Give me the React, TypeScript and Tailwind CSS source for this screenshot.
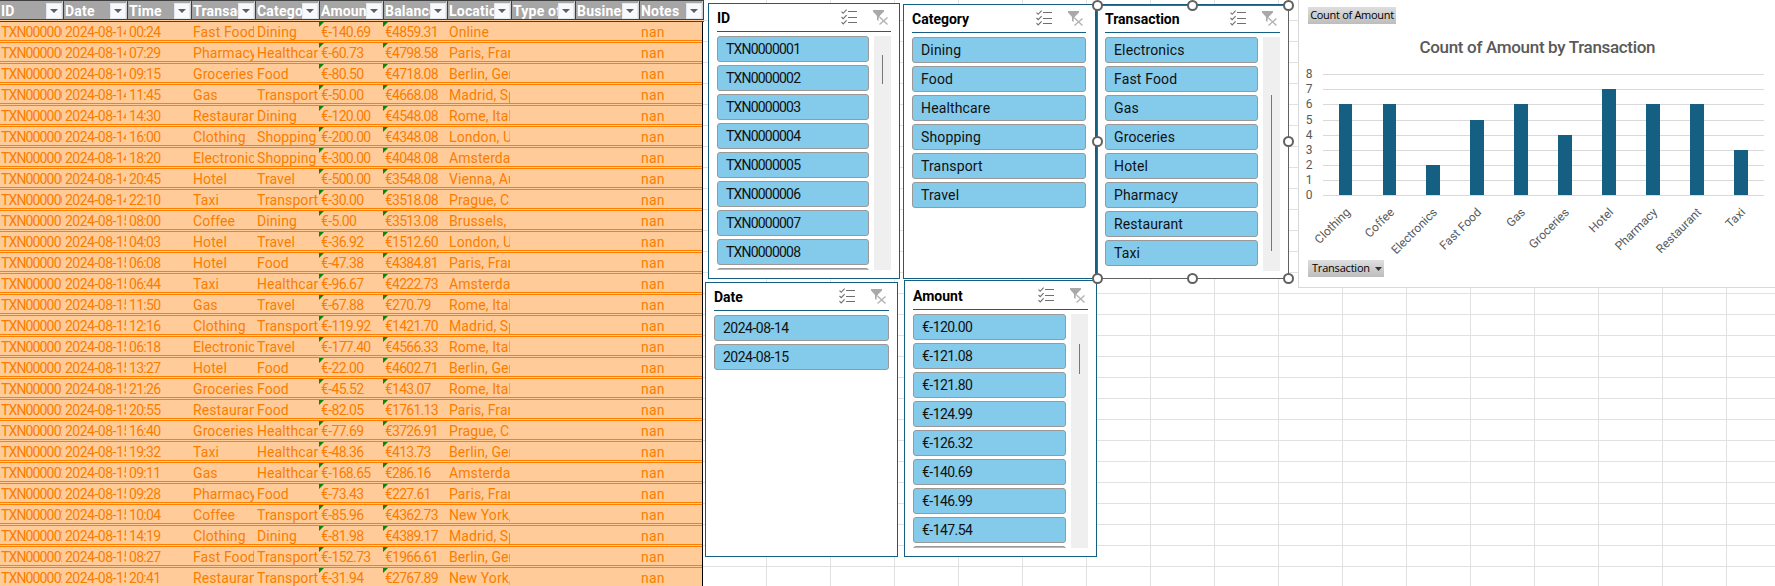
import React from "react";

type Row = [string, string, string, string, string, string, string, string];

const D1 = "2024-08-14";
const D2 = "2024-08-15";
const rows: Row[] = [
  ["TXN0000001", D1, "00:24", "Fast Food", "Dining", "€-140.69", "€4859.31", "Online"],
  ["TXN0000002", D1, "07:29", "Pharmacy", "Healthcare", "€-60.73", "€4798.58", "Paris, France"],
  ["TXN0000003", D1, "09:15", "Groceries", "Food", "€-80.50", "€4718.08", "Berlin, Germany"],
  ["TXN0000004", D1, "11:45", "Gas", "Transport", "€-50.00", "€4668.08", "Madrid, Spain"],
  ["TXN0000005", D1, "14:30", "Restaurant", "Dining", "€-120.00", "€4548.08", "Rome, Italy"],
  ["TXN0000006", D1, "16:00", "Clothing", "Shopping", "€-200.00", "€4348.08", "London, UK"],
  ["TXN0000007", D1, "18:20", "Electronics", "Shopping", "€-300.00", "€4048.08", "Amsterdam"],
  ["TXN0000008", D1, "20:45", "Hotel", "Travel", "€-500.00", "€3548.08", "Vienna, Austria"],
  ["TXN0000009", D1, "22:10", "Taxi", "Transport", "€-30.00", "€3518.08", "Prague, Czechia"],
  ["TXN0000010", D2, "08:00", "Coffee", "Dining", "€-5.00", "€3513.08", "Brussels, Belgium"],
  ["TXN0000011", D2, "04:03", "Hotel", "Travel", "€-36.92", "€1512.60", "London, UK"],
  ["TXN0000012", D2, "06:08", "Hotel", "Food", "€-47.38", "€4384.81", "Paris, France"],
  ["TXN0000013", D2, "06:44", "Taxi", "Healthcare", "€-96.67", "€4222.73", "Amsterdam"],
  ["TXN0000014", D2, "11:50", "Gas", "Travel", "€-67.88", "€270.79", "Rome, Italy"],
  ["TXN0000015", D2, "12:16", "Clothing", "Transport", "€-119.92", "€1421.70", "Madrid, Spain"],
  ["TXN0000016", D2, "06:18", "Electronics", "Travel", "€-177.40", "€4566.33", "Rome, Italy"],
  ["TXN0000017", D2, "13:27", "Hotel", "Food", "€-22.00", "€4602.71", "Berlin, Germany"],
  ["TXN0000018", D2, "21:26", "Groceries", "Food", "€-45.52", "€143.07", "Rome, Italy"],
  ["TXN0000020", D2, "20:55", "Restaurant", "Food", "€-82.05", "€1761.13", "Paris, France"],
  ["TXN0000021", D2, "16:40", "Groceries", "Healthcare", "€-77.69", "€3726.91", "Prague, Czechia"],
  ["TXN0000022", D2, "19:32", "Taxi", "Healthcare", "€-48.36", "€413.73", "Berlin, Germany"],
  ["TXN0000023", D2, "09:11", "Gas", "Healthcare", "€-168.65", "€286.16", "Amsterdam"],
  ["TXN0000024", D2, "09:28", "Pharmacy", "Food", "€-73.43", "€227.61", "Paris, France"],
  ["TXN0000025", D2, "10:04", "Coffee", "Transport", "€-85.96", "€4362.73", "New York, USA"],
  ["TXN0000026", D2, "14:19", "Clothing", "Dining", "€-81.98", "€4389.17", "Madrid, Spain"],
  ["TXN0000027", D2, "08:27", "Fast Food", "Transport", "€-152.73", "€1966.61", "Berlin, Germany"],
  ["TXN0000028", D2, "20:41", "Restaurant", "Transport", "€-31.94", "€2767.89", "New York, USA"],
];

const headers = [
  "ID", "Date", "Time", "Transaction", "Category", "Amount",
  "Balance", "Location", "Type of", "Business", "Notes",
];

const columnTracking = [
  "tracking-[-0.85px]", "tracking-[-0.5px]", "tracking-[-0.7px]", "tracking-[0.1px]", "tracking-[0.1px]",
  "tracking-[-0.65px]", "tracking-[-0.75px]", "tracking-[0.1px]", "", "", "tracking-[0.2px]",
];

function HeaderCell({ label }: { label: string }) {
  return (
    <div className="flex h-full w-16 shrink-0 items-start border-r border-[#404040] pl-px">
      <div className="flex h-[18px] w-[62px] border-r border-[#d0d0d0]">
        <div className="h-[19px] w-[45px] shrink-0 overflow-hidden whitespace-nowrap text-[14px] leading-[21px] font-bold tracking-[0.2px] text-white">
          {label}
        </div>
        <div className="mt-[2px] flex h-4 w-4 shrink-0 items-center justify-center border border-[#e3e8f0] bg-[#f7f9fc]">
          <svg width="8" height="4" viewBox="0 0 8 4">
            <path d="M0 0H8L4 4Z" fill="#5f5f5f" />
          </svg>
        </div>
      </div>
    </div>
  );
}

function Cell({ value, col }: { value: string; col: number }) {
  const money = col === 5 || col === 6;
  return (
    <div className="relative h-[18px] w-16 shrink-0 pl-px">
      {money && (
        <svg className="absolute -left-px top-0" width="5" height="5" viewBox="0 0 5 5">
          <path d="M0 0H5L0 5Z" fill="#0a850a" />
        </svg>
      )}
      <div
        className={
          "h-[18px] w-[61px] overflow-hidden whitespace-nowrap text-[14px] leading-[21px] " + columnTracking[col]
        }
      >
        {value}
      </div>
    </div>
  );
}

function Table() {
  return (
    <div className="h-[586px] w-[704px] shrink-0 overflow-hidden">
      <div className="flex h-5 w-[704px] border-y border-[#404040] bg-[#a6a6a6]">
        {headers.map((h) => (
          <HeaderCell key={h} label={h} />
        ))}
      </div>
      <div className="h-[2px] w-[704px] border-b border-[#404040] bg-[#ffcc99]" />
      <div className="w-[703px] border-r border-black bg-[#ffcc99] text-[#fa7d00]">
        {rows.map((r) => (
          <div key={r[0]} className="h-[21px]">
            <div className="flex h-[18px]">
              {r.map((v, i) => (
                <Cell key={i} value={v} col={i} />
              ))}
              <div className="w-32 shrink-0" />
              <Cell value="nan" col={10} />
            </div>
            <div className="h-[3px] border-y border-[#ff8001]" />
          </div>
        ))}
      </div>
    </div>
  );
}

function SlicerIcons() {
  return (
    <svg width="48" height="17" viewBox="0 0 48 17" fill="none">
      <g stroke="#6f6f6f" strokeWidth="1.1">
        <path d="M.5 2.6 2.2 4.3 5.6.7M.5 8 2.2 9.7 5.6 6.1M.5 13.2 2.2 14.9 5.6 11.3" />
        <path d="M7 2.5h9M7 8.5h9M7 13.5h9" />
      </g>
      <path d="M32 1H43V2.5L39 6.5V8L37.5 9.5V12L36 11V7L32 2.5Z" fill="#a9a9a9" />
      <path d="M38.5 7.5 47 15.5M46.5 8 38 15.5" stroke="#fff" strokeWidth="3" />
      <path d="M38.5 8 46.5 15.5M46.5 8.5 38.5 15.5" stroke="#b3b3b3" strokeWidth="1.4" />
    </svg>
  );
}

function Slicer({
  title, items, place, body, list, thumb, tracking = "tracking-[0.15px]", partial,
}: {
  title: string;
  items: string[];
  place: string;
  body: string;
  list: string;
  thumb?: string;
  tracking?: string;
  partial?: boolean;
}) {
  return (
    <section className={"absolute border border-[#156082] bg-white pl-2 " + place}>
      <header className={"flex h-7 items-start justify-between border-b border-[#156082] " + body}>
        <h2 className="pt-1 text-[14px] leading-[21px] font-bold text-black">{title}</h2>
        <div className="mr-[2px] pt-[5px]">
          <SlicerIcons />
        </div>
      </header>
      <div className={"mt-1 flex h-[234px] justify-between " + body}>
        <ul className={"flex flex-col gap-[3px] overflow-hidden " + list}>
          {items.map((t) => (
            <li
              key={t}
              className={
                "h-[26px] shrink-0 rounded-[3px] border border-[#999] bg-[#83caeb] pl-2 text-[14px] leading-[25px] text-[#111] " +
                tracking
              }
            >
              {t}
            </li>
          ))}
          {partial && <li className="h-[26px] shrink-0 rounded-[3px] border border-[#999] bg-[#83caeb]" />}
        </ul>
        {thumb && (
          <div className="flex w-[17px] bg-[#efefef] pl-2">
            <div className={"w-px bg-[#777] " + thumb} />
          </div>
        )}
      </div>
    </section>
  );
}

const handles = [
  "left-[-5px] top-[-5px]", "left-[90px] top-[-5px]", "left-[186px] top-[-5px]",
  "left-[-5px] top-[131px]", "left-[186px] top-[131px]",
  "left-[-5px] top-[268px]", "left-[90px] top-[268px]", "left-[186px] top-[268px]",
];

function Selection() {
  return (
    <div className="absolute left-[1097px] top-[5px] h-[274px] w-[192px] shadow-[inset_0_0_0_1px_#616161]">
      {handles.map((h) => (
        <div key={h} className={"absolute h-[11px] w-[11px] rounded-full border-2 border-[#616161] bg-white " + h} />
      ))}
    </div>
  );
}

const bars: [string, number, number][] = [
  ["Clothing", 6, 41], ["Coffee", 6, 85], ["Electronics", 2, 128], ["Fast Food", 5, 172], ["Gas", 6, 216],
  ["Groceries", 4, 260], ["Hotel", 7, 304], ["Pharmacy", 6, 348], ["Restaurant", 6, 392], ["Taxi", 3, 436],
];

function Chart() {
  const y = (v: number) => Math.round(195 - v * 15.1);
  return (
    <section className="absolute left-[1298px] top-0 h-[288px] w-[477px] border-b border-l border-[#d9d9d9] bg-white">
      <svg className="absolute left-0 top-0" width="476" height="287" fontFamily="Roboto, sans-serif" fill="#595959">
        <text x="120.5" y="53" fontSize="17" fontWeight="500" textLength="236">Count of Amount by Transaction</text>
        {[0, 1, 2, 3, 4, 5, 6, 7, 8].map((v) => (
          <g key={v}>
            <rect x="24" y={y(v)} width="441" height="1" fill="#d9d9d9" />
            <text x="10" y={y(v) + 4} fontSize="12" textAnchor="middle">{v}</text>
          </g>
        ))}
        {bars.map(([name, v, x], i) => (
          <g key={name}>
            <rect x={x - 1} y={y(v)} width={i < 2 ? 13 : 14} height={195 - y(v)} fill="#156082" />
            <text transform={`translate(${x + 11} 213) rotate(-45)`} fontSize="12" textAnchor="end">{name}</text>
          </g>
        ))}
      </svg>
      <div className="absolute left-[9px] top-[7px] flex h-[17px] w-[88px] items-center justify-center whitespace-nowrap bg-linear-to-b from-[#dedede] to-[#bdbdbd] font-['Open_Sans'] text-[11px] tracking-[-0.3px] text-black">
        Count of Amount
      </div>
      <div className="absolute left-[9px] top-[260px] flex h-[17px] w-[76px] items-center gap-[5px] whitespace-nowrap bg-linear-to-b from-[#dedede] to-[#bdbdbd] pl-1 font-['Open_Sans'] text-[11px] tracking-[-0.2px] text-black">
        Transaction
        <svg width="7" height="4" viewBox="0 0 7 4">
          <path d="M0 0H7L3.5 4Z" fill="#333" />
        </svg>
      </div>
    </section>
  );
}

const ids = [1, 2, 3, 4, 5, 6, 7, 8].map((n) => "TXN000000" + n);

export default function App() {
  return (
    <main className="relative flex h-[586px] w-[1775px] overflow-hidden bg-white bg-[linear-gradient(to_right,#e1e1e1_1px,transparent_1px),linear-gradient(to_bottom,#e1e1e1_1px,transparent_1px)] bg-[length:64px_21px] bg-[position:62px_20px] font-['Roboto',sans-serif]">
      <Table />
      <Slicer title="ID" items={ids} partial tracking="tracking-[-0.8px]" place="left-[708px] top-[3px] h-[276px] w-[192px]" body="w-[174px]" list="w-[152px]" thumb="mt-[19px] h-[29px]" />
      <Slicer title="Category" items={["Dining", "Food", "Healthcare", "Shopping", "Transport", "Travel"]} place="left-[903px] top-[4px] h-[275px] w-[193px]" body="w-[174px]" list="w-[174px]" />
      <Slicer title="Date" items={[D1, D2]} tracking="tracking-[-0.5px]" place="left-[705px] top-[282px] h-[275px] w-[193px]" body="w-[175px]" list="w-[175px]" />
      <Slicer title="Amount" items={["€-120.00", "€-121.08", "€-121.80", "€-124.99", "€-126.32", "€-140.69", "€-146.99", "€-147.54"]} partial tracking="tracking-[-0.55px]" place="left-[904px] top-[280px] h-[277px] w-[193px] pt-px" body="w-[175px]" list="w-[153px]" thumb="mt-[30px] h-[30px]" />
      <Slicer title="Transaction" items={["Electronics", "Fast Food", "Gas", "Groceries", "Hotel", "Pharmacy", "Restaurant", "Taxi"]} place="left-[1096px] top-[4px] h-[275px] w-[193px]" body="w-[175px]" list="w-[153px]" thumb="mt-[58px] h-[156px]" />
      <Selection />
      <Chart />
    </main>
  );
}
